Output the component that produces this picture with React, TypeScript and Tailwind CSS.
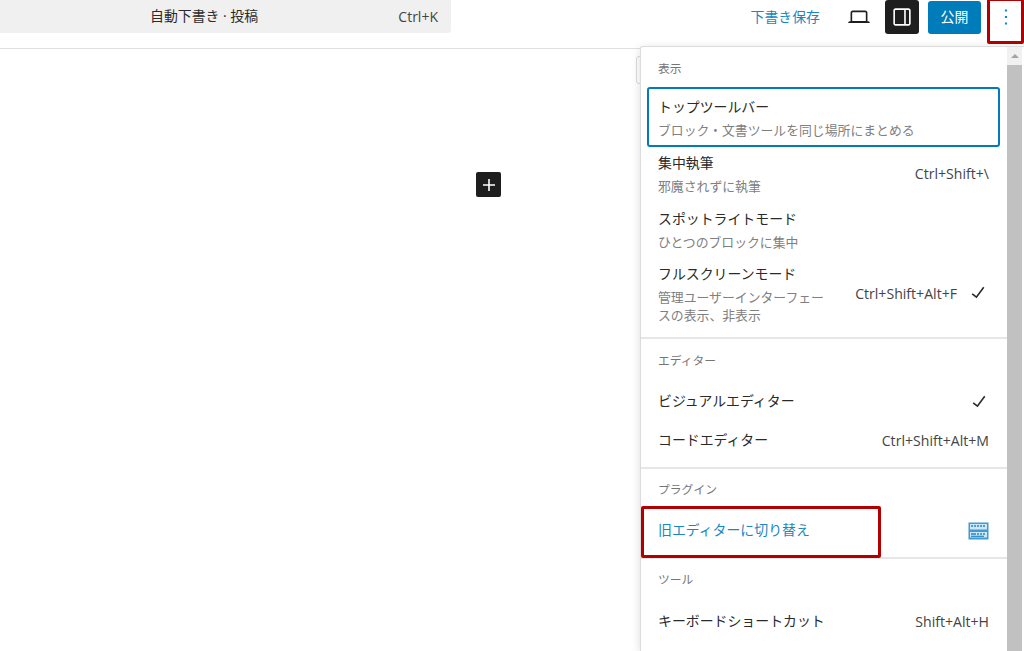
import type {ReactNode} from 'react'

const FONT =
  'font-["Open_Sans","Noto_Sans_CJK_JP","Noto_Sans",sans-serif]'

function Glyph({d, size = 26, className}: {d: string; size?: number; className?: string}) {
  return (
    <svg width={size} height={size} viewBox="0 0 24 24" fill="currentColor" aria-hidden className={className}>
      <path d={d} />
    </svg>
  )
}

const CHECK = 'M16.7 7.1l-6.3 8.5-3.3-2.5-.9 1.2 4.5 3.4L17.9 8z'

/** The menu's small grey heading above each group. */
function GroupLabel({children, className}: {children: ReactNode; className: string}) {
  return (
    <div className={`px-[17px] text-[11.8px] leading-[16px] text-[#757575] ${className}`}>
      {children}
    </div>
  )
}

/** Plain row: a label, and a shortcut and/or tick on the right. */
function Row({label, shortcut, check, className}: {label: string; shortcut?: string; check?: boolean; className: string}) {
  return (
    <div className={`flex items-center pl-[17px] pr-[18px] text-[13.9px] text-[#2a2a2a] ${className}`}>
      <span>{label}</span>
      {shortcut && <span className="ml-auto text-[14.1px] text-[#444]">{shortcut}</span>}
      {check && <Glyph d={CHECK} size={26} className="ml-auto -mr-[3px] -mt-[1px]" />}
    </div>
  )
}

/** Row with a grey description under the label. */
function DescRow({label, desc, shortcut}: {label: string; desc: ReactNode; shortcut?: string}) {
  return (
    <div className="flex h-[56px] items-center pl-[17px] pr-[18px]">
      <div className="w-[172px] shrink-0 self-start pt-[4px]">
        <div className="whitespace-nowrap text-[13.9px] leading-[24px] text-[#2a2a2a]">{label}</div>
        <div className="whitespace-nowrap text-[12.85px] leading-[22px] text-[#808080]">{desc}</div>
      </div>
      {shortcut && <span className="ml-auto -mt-[2px] text-[14.1px] text-[#444]">{shortcut}</span>}
    </div>
  )
}

function Menu() {
  return (
    <div className="absolute left-[640px] right-0 top-[46px] bottom-0 flex overflow-hidden rounded-tl-[3px] border-l border-t border-[#dcdcdc] bg-white shadow-[0_2px_10px_rgba(0,0,0,0.14)]">
      <div className="min-w-0 flex-1">
        <GroupLabel className="pt-[13px]">表示</GroupLabel>
        <div className="ml-[6px] mr-[7px] mt-[11px] flex h-[60px] flex-col rounded-[3px] border-2 border-[#007cba] px-[9px] pt-[6px]">
          <div className="text-[13.9px] leading-[24px] text-[#2a2a2a]">トップツールバー</div>
          <div className="text-[12.85px] leading-[22px] text-[#808080]">ブロック・文書ツールを同じ場所にまとめる</div>
        </div>
        <DescRow label="集中執筆" desc="邪魔されずに執筆" shortcut="Ctrl+Shift+\" />
        <DescRow label="スポットライトモード" desc="ひとつのブロックに集中" />
        <div className="flex h-[80px] border-b-2 border-[#e6e6e6] pl-[17px] pr-[16px]">
          <div className="w-[172px] shrink-0 pt-[3px]">
            <div className="whitespace-nowrap text-[13.9px] leading-[24px] text-[#2a2a2a]">フルスクリーンモード</div>
            <div className="mt-[2px] text-[12.85px] leading-[18px] text-[#808080]">管理ユーザーインターフェースの表示、非表示</div>
          </div>
          <span className="ml-auto pt-[23px] text-[14.1px] leading-[24px] text-[#444]">Ctrl+Shift+Alt+F</span>
          <Glyph d={CHECK} className="ml-[8px] mt-[20px] text-[#2a2a2a]" />
        </div>
        <GroupLabel className="pt-[13px]">エディター</GroupLabel>
        <Row className="mt-[14px] h-[39px]" label="ビジュアルエディター" check />
        <Row className="h-[39px]" label="コードエディター" shortcut="Ctrl+Shift+Alt+M" />
        <div className="mt-[7px] border-b-2 border-[#e6e6e6]" />
        <GroupLabel className="pt-[12px]">プラグイン</GroupLabel>
        <div className="mt-[14px] flex h-[39px] items-center pl-[17px] pr-[18px] text-[13.9px] text-[#1a87c0]">
          <span>旧エディターに切り替え</span>
          <svg width="21" height="18" viewBox="0 0 21 18" aria-hidden className="ml-auto">
            <rect x="0.5" y="0.5" width="20" height="17" fill="#3f9bd0" />
            <rect x="2" y="2" width="17" height="5.5" fill="#cfe6f4" />
            <rect x="2" y="10" width="17" height="5.5" fill="#cfe6f4" />
            <path d="M3 4h2M6 4h2M9 4h2M12 4h2M15 4h2M3 12h5M9 12h2M12 12h2M15 12h2" stroke="#2a86bd" strokeWidth="1.4" />
            <path d="M3 14.3h13" stroke="#2a86bd" strokeWidth="1.2" />
          </svg>
        </div>
        <div className="mt-[7px] border-b-2 border-[#e6e6e6]" />
        <GroupLabel className="pt-[12px]">ツール</GroupLabel>
        <Row className="mt-[15px] h-[39px]" label="キーボードショートカット" shortcut="Shift+Alt+H" />
      </div>
      <div className="mr-[2px] flex w-[15px] shrink-0 flex-col bg-[#f1f1f1]">
        <div className="flex h-[18px] items-center justify-center">
          <div className="h-0 w-0 border-x-[4px] border-b-[4px] border-x-transparent border-b-[#a3a3a3]" />
        </div>
        <div className="flex-1 bg-[#c1c1c1]" />
      </div>
    </div>
  )
}

export default function App() {
  return (
    <div className={`relative h-[651px] w-[1024px] overflow-hidden bg-white ${FONT}`}>
      <header className="flex h-[49px] items-start border-b border-[#e0e0e0]">
        <div className="flex h-[33px] w-[451px] items-center rounded-br-[3px] bg-[#f0f0f0] pl-[150px] pr-[13px] text-[#2a2a2a]">
          <span className="text-[13.9px]">自動下書き · 投稿</span>
          <span className="ml-auto text-[14px] text-[#444]">Ctrl+K</span>
        </div>
        <div className="ml-auto flex h-[34px] items-center pr-[1px]">
          <span className="text-[13.9px] text-[#1a87c0]">下書き保存</span>
          <Glyph
            size={26}
            className="ml-[26px] text-[#1e1e1e]"
            d="M20.5 16h-.7V8c0-1.1-.9-2-2-2H6.2c-1.1 0-2 .9-2 2v8h-.7c-.8 0-1.5.7-1.5 1.5h20c0-.8-.7-1.5-1.5-1.5zM5.7 8c0-.3.2-.5.5-.5h11.6c.3 0 .5.2.5.5v7.6H5.7V8z"
          />
          <div className="ml-[13px] flex h-[34px] w-[34px] items-center justify-center rounded-[3px] bg-[#1e1e1e] text-white">
            <Glyph d="M18 4H6c-1.1 0-2 .9-2 2v12c0 1.1.9 2 2 2h12c1.1 0 2-.9 2-2V6c0-1.1-.9-2-2-2zm-4 14.5H6c-.3 0-.5-.2-.5-.5V6c0-.3.2-.5.5-.5h8v13zm4.5-.5c0 .3-.2.5-.5.5h-2.5v-13H18c.3 0 .5.2.5.5v12z" />
          </div>
          <div className="ml-[9px] flex h-[33px] w-[53px] items-center justify-center rounded-[3px] bg-[#007cba] text-[13.9px] text-white">
            公開
          </div>
          <div className="ml-[6px] flex h-[34px] w-[36px] items-center justify-center pl-[1px] text-[#1a87c0]">
            <Glyph d="M13 19h-2v-2h2v2zm0-6h-2v-2h2v2zm0-6h-2V5h2v2z" />
          </div>
        </div>
      </header>
      <main className="h-[601px] border-b border-[#dcdcdc]">
        <div className="ml-[476px] mt-[123px] flex h-[25px] w-[25px] items-center justify-center rounded-[2px] bg-[#1e1e1e] text-white">
          <Glyph d="M18 11.2h-5.2V6h-1.6v5.2H6v1.6h5.2V18h1.6v-5.2H18z" size={24} />
        </div>
      </main>
      {/* peek of the block toolbar button the menu covers */}
      <div className="absolute left-[636px] top-[56px] h-[28px] w-[10px] rounded-l-[3px] border border-[#dcdcdc]" />
      <Menu />
      {/* the screenshot's red callouts */}
      <div className="absolute left-[987px] top-[-2px] h-[46px] w-[37px] rounded-[2px] border-[3px] border-[#b20000]" />
      <div className="absolute left-[641px] top-[506px] h-[52px] w-[240px] rounded-[2px] border-[3px] border-[#b20000]" />
    </div>
  )
}
